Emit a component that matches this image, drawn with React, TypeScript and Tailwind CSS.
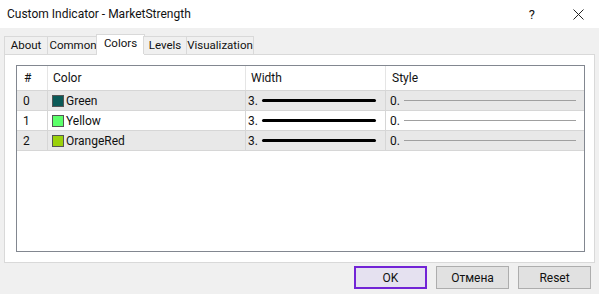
import React from 'react';

type LineRow = {
  index: number;
  name: string;
  swatch: string;
  width: string;
  style: string;
};

const rows: LineRow[] = [
  { index: 0, name: 'Green', swatch: 'bg-[#0b5a57]', width: '3.', style: '0.' },
  { index: 1, name: 'Yellow', swatch: 'bg-[#5cff6a]', width: '3.', style: '0.' },
  { index: 2, name: 'OrangeRed', swatch: 'bg-[#9ad10a]', width: '3.', style: '0.' }
];

const tabs = [
  { label: 'About', w: 'w-[43px]' },
  { label: 'Common', w: 'w-[51px]' },
  { label: 'Colors', w: 'w-[49px]' },
  { label: 'Levels', w: 'w-[43px]' },
  { label: 'Visualization', w: 'w-[68px]' }
];

const App = () => {
  return (
    <div className="flex h-[294px] w-[599px] flex-col overflow-hidden bg-[#f0f0f0] font-['Roboto','Liberation_Sans',sans-serif] text-[12px] text-[#111]">
      {/* title bar */}
      <header className="flex h-[28px] items-center bg-white pl-[7px]">
        <span className="flex-1 text-[12px] leading-none">Custom Indicator - MarketStrength</span>
        <span className="mr-[38px] text-[13px] leading-none">?</span>
        <svg width="11" height="11" viewBox="0 0 11 11" className="mr-[15px]">
          <path d="M0.5 0.5 L10.5 10.5 M10.5 0.5 L0.5 10.5" stroke="#222" strokeWidth="1" />
        </svg>
      </header>

      <div className="flex flex-col px-[4px] pt-[8px]">
        {/* tabs */}
        <div className="relative z-10 flex h-[18px] items-end text-[11.5px]">
          {tabs.map((tab, i) => {
            const active = tab.label === 'Colors';
            return (
              <div
                key={tab.label}
                className={`${tab.w} flex shrink-0 items-center justify-center border-t border-l border-[#d9d9d9] leading-none ${
                  i === tabs.length - 1 ? 'border-r' : ''
                } ${
                  active
                    ? '-mx-[2px] mb-[-1px] h-[21px] border-r bg-white pb-[3px]'
                    : 'h-[18px] bg-[#f0f0f0]'
                }`}
              >
                {tab.label}
              </div>
            );
          })}
        </div>

        {/* panel */}
        <div className="flex h-[209px] w-[591px] flex-col border border-[#d9d9d9] bg-white pl-[11px] pt-[10px]">
          <div className="flex h-[187px] w-[569px] flex-col border border-[#828790]">
            {/* header */}
            <div className="flex h-[25px] border-b border-[#d6d6d6]">
              <div className="flex w-[31px] items-center border-r border-[#e5e5e5] pl-[7px]">#</div>
              <div className="flex w-[198px] items-center border-r border-[#e5e5e5] pl-[5px]">Color</div>
              <div className="flex w-[140px] items-center border-r border-[#e5e5e5] pl-[5px]">Width</div>
              <div className="flex flex-1 items-center pl-[6px]">Style</div>
            </div>
            {rows.map((row) => (
              <div
                key={row.index}
                className={`flex h-[20px] border-b border-[#d6d6d6] ${row.index % 2 === 0 ? 'bg-[#e8e8e8]' : 'bg-white'}`}
              >
                <div className="flex w-[31px] items-center border-r border-[#d6d6d6] pl-[6px]">{row.index}</div>
                <div className="flex w-[198px] items-center gap-[2px] border-r border-[#d6d6d6] pl-[4px]">
                  <span className={`h-[12px] w-[12px] border border-[#555] ${row.swatch}`} />
                  <span>{row.name}</span>
                </div>
                <div className="flex w-[140px] items-center border-r border-[#d6d6d6] pl-[2px]">
                  <span className="w-[14px]">{row.width}</span>
                  <span className="h-[3px] w-[114px] rounded-full bg-black" />
                </div>
                <div className="flex flex-1 items-center pl-[4px]">
                  <span className="w-[14px]">{row.style}</span>
                  <span className="h-px w-[172px] bg-[#a0a0a0]" />
                </div>
              </div>
            ))}
          </div>
        </div>

        {/* buttons */}
        <div className="flex justify-end gap-[9px] pr-[4px] pt-[3px]">
          <button
            type="button"
            className="h-[23px] w-[73px] border-2 border-[#7224d6] bg-[#e5e1f0] leading-none"
          >
            OK
          </button>
          <button type="button" className="h-[23px] w-[73px] border border-[#adadad] bg-[#e1e1e1] leading-none">
            Отмена
          </button>
          <button type="button" className="h-[23px] w-[73px] border border-[#adadad] bg-[#e1e1e1] leading-none">
            Reset
          </button>
        </div>
      </div>
    </div>
  );
};

export default App;
